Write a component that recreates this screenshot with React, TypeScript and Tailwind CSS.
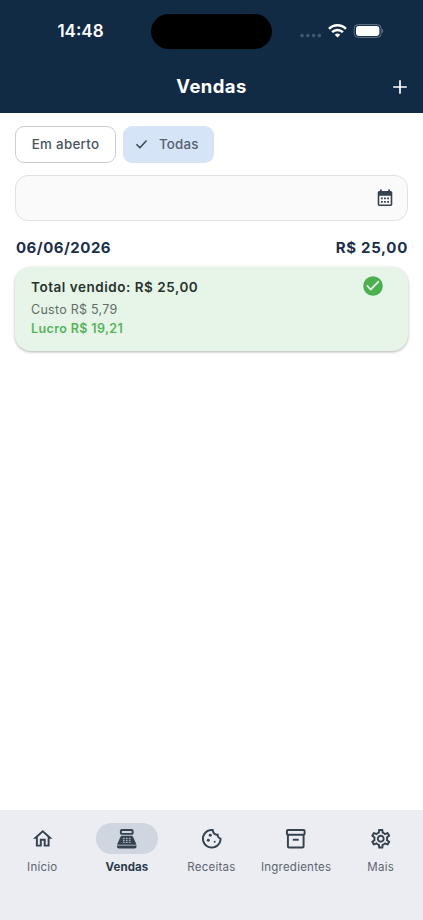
import type React from "react";
import {
  MdOutlineCookie,
  MdOutlineHome,
  MdOutlineInventory2,
  MdOutlineSettings,
  MdPointOfSale,
} from "react-icons/md";

const TABS = [
  { label: "Início", icon: MdOutlineHome },
  { label: "Vendas", icon: MdPointOfSale },
  { label: "Receitas", icon: MdOutlineCookie },
  { label: "Ingredientes", icon: MdOutlineInventory2 },
  { label: "Mais", icon: MdOutlineSettings },
];

const CalendarIcon: React.FC = () => (
  <svg width="16" height="18" viewBox="0 0 16 18" fill="#36424f">
    <path
      fillRule="evenodd"
      d="M3 .5h1.8V2h6.4V.5H13V2h.6c1 0 1.7.8 1.7 1.7v11.6c0 1-.8 1.7-1.7 1.7H2.4c-1 0-1.7-.8-1.7-1.7V3.7C.7 2.8 1.5 2 2.4 2H3V.5ZM2.3 6.8v8.6h11.4V6.8H2.3Z"
    />
    <path d="M4 8.5h1.8v1.8H4zM7.1 8.5h1.8v1.8H7.1zM10.2 8.5H12v1.8h-1.8zM4 11.9h1.8v1.8H4zM7.1 11.9h1.8v1.8H7.1zM10.2 11.9H12v1.8h-1.8z" />
  </svg>
);

const StatusBar: React.FC = () => (
  <div className="grid h-[62px] grid-cols-[151px_121px_1fr] items-center">
    <span className="pt-px pl-[10px] text-center text-[17px] leading-none font-semibold">
      14:48
    </span>
    <div className="h-[35px] rounded-full bg-black" />
    <div className="flex items-center pl-[28px]">
      <svg width="22" height="16" viewBox="0 0 22 16" fill="#435870">
        <circle cx="2" cy="12.6" r="1.8" />
        <circle cx="7.8" cy="12.6" r="1.8" />
        <circle cx="13.6" cy="12.6" r="1.8" />
        <circle cx="19.4" cy="12.6" r="1.8" />
      </svg>
      <svg
        className="ml-[6px]"
        width="19"
        height="14"
        viewBox="0 0 19 14"
        fill="none"
        stroke="#fff"
        strokeWidth="2.5"
      >
        <path d="M1 4.9a12 12 0 0 1 17 0" />
        <path d="M4.1 8.2a7.6 7.6 0 0 1 10.8 0" />
        <path d="M9.5 13.6 6.7 10.8a4 4 0 0 1 5.6 0Z" fill="#fff" stroke="none" />
      </svg>
      <svg className="ml-[6px]" width="31" height="14" viewBox="0 0 31 14">
        <rect
          x="1.2"
          y="0.6"
          width="27"
          height="12.8"
          rx="4"
          fill="none"
          stroke="#667689"
        />
        <rect x="3" y="2.1" width="23.4" height="9.8" rx="2.8" fill="#fff" />
        <path d="M29.2 4.8v4.4c1.4-.6 1.4-3.8 0-4.4Z" fill="#667689" />
      </svg>
    </div>
  </div>
);

const BottomNav: React.FC = () => (
  <nav className="grid h-[110px] grid-cols-5 items-start bg-[#ecedf3] pt-[13px]">
    {TABS.map(({ label, icon: Icon }) => {
      const active = label === "Vendas";
      return (
        <button key={label} className="flex flex-col items-center">
          <span
            className={`flex h-[31px] w-[62px] items-center justify-center rounded-full text-[#35424f] ${
              active ? "bg-[#d0d6df]" : ""
            }`}
          >
            <Icon size={23.5} />
          </span>
          <span
            className={`mt-[5px] text-[11.5px] leading-[16px] whitespace-nowrap ${
              active
                ? "font-bold tracking-[0.05px] text-[#2c3b4d]"
                : "tracking-[0.24px] text-[#5c6571]"
            }`}
          >
            {label}
          </span>
        </button>
      );
    })}
  </nav>
);

const App: React.FC = () => {
  return (
    <div className="flex h-[920px] w-[423px] flex-col bg-white font-['Inter','Liberation_Sans',sans-serif]">
      <header className="h-[113px] bg-[#122b45] text-white">
        <StatusBar />
        <div className="grid h-[49px] grid-cols-[60px_1fr_60px] items-center">
          <h1 className="col-start-2 text-center text-[18.5px] leading-none font-bold tracking-[0.4px]">
            Vendas
          </h1>
          <button className="justify-self-end pr-[16px]">
            <svg
              width="14"
              height="14"
              viewBox="0 0 14 14"
              stroke="#fff"
              strokeWidth="1.7"
              strokeLinecap="round"
            >
              <path d="M7 .9v12.2M.9 7h12.2" />
            </svg>
          </button>
        </div>
      </header>

      <main className="flex-1 px-[15px] pt-[13px]">
        <div className="flex gap-[7px]">
          <button className="h-[37px] w-[101px] rounded-[9px] border border-[#cbcdd3] text-[13.3px] font-medium tracking-[0.3px] text-[#4b525c]">
            Em aberto
          </button>
          <button className="flex h-[37px] w-[91px] items-center rounded-[9px] bg-[#d6e4f7] pl-[13px] text-[13.3px] font-medium tracking-[0.2px] text-[#56616f]">
            <svg
              className="mr-[12px]"
              width="11"
              height="9"
              viewBox="0 0 11 9"
              fill="none"
              stroke="#3d4956"
              strokeWidth="1.6"
              strokeLinecap="round"
              strokeLinejoin="round"
            >
              <path d="m.9 4.7 3 3L10.1 1" />
            </svg>
            Todas
          </button>
        </div>

        <div className="mt-[12px] flex h-[46px] items-center justify-end rounded-[13px] border border-[#e1e2e4] bg-[#fafafa] pr-[14px]">
          <CalendarIcon />
        </div>

        <div className="mt-[17px] flex h-[20px] items-center justify-between pl-px text-[15px] font-bold text-[#1c2f48]">
          <span className="tracking-[0.5px]">06/06/2026</span>
          <span className="tracking-[0.7px]">R$ 25,00</span>
        </div>

        <section className="mt-[9px] flex h-[84px] justify-between rounded-[16px] bg-[#e7f5e9] pt-[11px] pr-[25px] pl-[16px] shadow-[0_1px_3px_rgba(0,0,0,0.3)]">
          <div className="leading-[19px]">
            <p className="text-[13.5px] font-semibold tracking-[0.53px] text-[#27332d]">
              Total vendido: R$ 25,00
            </p>
            <p className="mt-[3px] text-[12.5px] tracking-[0.26px] text-[#626d67]">
              Custo R$ 5,79
            </p>
            <p className="text-[12.5px] font-semibold tracking-[0.38px] text-[#55b45a]">
              Lucro R$ 19,21
            </p>
          </div>
          <svg
            className="-mt-[2px]"
            width="20"
            height="20"
            viewBox="0 0 20 20"
            fill="none"
          >
            <circle cx="10" cy="10" r="9.8" fill="#4caf50" />
            <path
              d="m4.4 10 3.2 3.5 7.7-7.7"
              stroke="#e7f5e9"
              strokeWidth="1.8"
              strokeLinecap="round"
              strokeLinejoin="round"
            />
          </svg>
        </section>
      </main>

      <BottomNav />
    </div>
  );
};

export default App;
